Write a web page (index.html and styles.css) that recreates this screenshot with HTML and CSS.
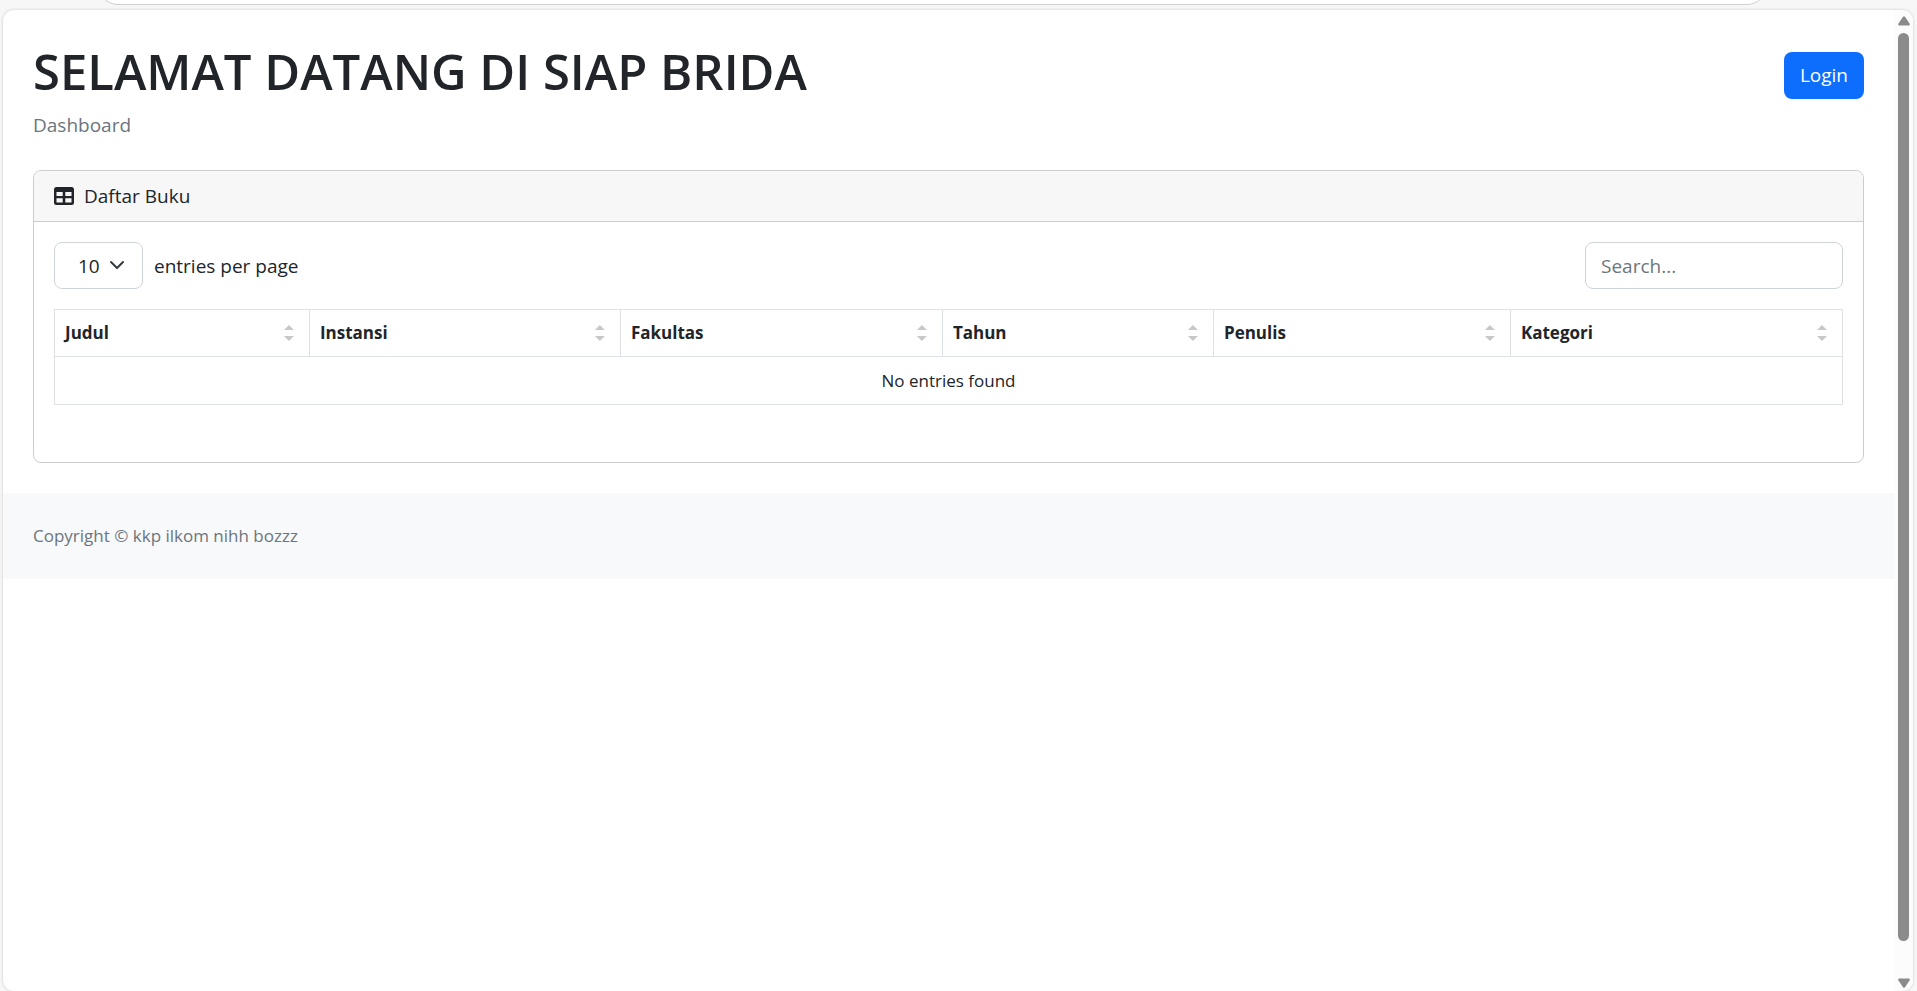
FILE: index.html
```html
<!DOCTYPE html>
<html lang="id">
<head>
<meta charset="utf-8">
<title>Dashboard - SIAP BRIDA</title>
<link rel="stylesheet" href="styles.css">
</head>
<body>
<div class="toolbar"><div class="address"></div></div>
<div class="window">
  <div class="page">
    <main class="content">
      <header class="heading">
        <h1 class="title">SELAMAT DATANG DI SIAP BRIDA</h1>
        <a class="login" href="#">Login</a>
      </header>
      <p class="crumb">Dashboard</p>
      <section class="card">
        <h2 class="card-header">
          <svg class="table-icon" viewBox="0 0 20 18" aria-hidden="true"><path fill="currentColor" fill-rule="evenodd" d="M2.5 0h15A2.5 2.5 0 0 1 20 2.500v13a2.500 2.500 0 0 1-2.500 2.500h-15A2.500 2.500 0 0 1 0 15.500v-13A2.500 2.500 0 0 1 2.500 0zM2.500 5v4h6.200V5zM11.300 5v4h6.200V5zM2.500 11.300v4.200h6.200v-4.200zM11.300 11.300v4.200h6.200v-4.200z"/></svg>
          Daftar Buku
        </h2>
        <div class="card-body">
          <div class="controls">
            <label class="per-page">
              <span class="select-wrap">
                <select class="select"><option>5</option><option selected>10</option><option>15</option></select>
                <svg class="chevron" viewBox="0 0 16 16" aria-hidden="true"><path d="M2 5l6 6 6-6" fill="none" stroke="#343a40" stroke-width="2" stroke-linecap="round" stroke-linejoin="round"/></svg>
              </span>
              entries per page
            </label>
            <input class="search" type="search" placeholder="Search..." aria-label="Search">
          </div>
          <table class="table">
            <colgroup><col class="c1"><col class="c2"><col class="c3"><col class="c4"><col class="c5"><col class="c6"></colgroup>
            <thead>
              <tr>
                <th><button class="sorter">Judul</button></th>
                <th><button class="sorter">Instansi</button></th>
                <th><button class="sorter">Fakultas</button></th>
                <th><button class="sorter">Tahun</button></th>
                <th><button class="sorter">Penulis</button></th>
                <th><button class="sorter">Kategori</button></th>
              </tr>
            </thead>
            <tbody><tr><td class="empty" colspan="6">No entries found</td></tr></tbody>
          </table>
        </div>
      </section>
    </main>
    <footer class="footer">Copyright © kkp ilkom nihh bozzz</footer>
  </div>
  <div class="scrollbar" aria-hidden="true">
    <svg class="arrow" viewBox="0 0 12 10"><path d="M5 .8Q6-.4 7 .8L11.700 7.800Q12.200 9.500 10.800 9.500H1.200Q-.2 9.500 .3 7.800z" fill="#8b8b8b"/></svg>
    <div class="thumb"></div>
    <svg class="arrow" viewBox="0 0 12 10"><path d="M5 9.200Q6 10.400 7 9.200L11.700 2.200Q12.200 .5 10.800 .5H1.200Q-.2 .5 .3 2.200z" fill="#8b8b8b"/></svg>
  </div>
</div>
</body>
</html>
```
FILE: styles.css
```css
* { box-sizing: border-box; }

body {
  margin: 0;
  height: 100vh;
  display: flex;
  flex-direction: column;
  background: #f7f7f7;
  color: #212529;
  font-family: "Open Sans", "Noto Sans", sans-serif;
  font-size: 19px;
  line-height: 30px;
  overflow: hidden;
}

.toolbar {
  flex: none;
  display: flex;
  align-items: flex-end;
  height: 10px;
  padding: 0 150px 5px 98px;
}

.address {
  flex: 1;
  height: 40px;
  background: #fff;
  border: 1px solid #d0d0d0;
  border-radius: 20px;
}

.window {
  flex: 1;
  min-height: 0;
  margin: 0 4px 0 3px;
  display: flex;
  background: #fff;
  border-radius: 11px;
  box-shadow: 0 0 3px rgba(0, 0, 0, .2);
  overflow: hidden;
}

.page { flex: 1; min-width: 0; }

.content { padding: 30px; }

.heading {
  display: flex;
  align-items: center;
  justify-content: space-between;
  margin-bottom: 8px;
}

.title {
  margin: 0;
  font-size: 49px;
  font-weight: 600;
  line-height: 62px;
}

.login {
  margin-top: 9px;
  padding: 8px 16px;
  border-radius: 8px;
  background: #0d6efd;
  color: #fff;
  line-height: 31px;
  text-decoration: none;
}

.crumb { margin: 0 0 30px; color: #6c757d; }

.card {
  border: 1px solid #ccc;
  border-radius: 8px;
  overflow: hidden;
}

.card-header {
  display: flex;
  align-items: center;
  gap: 10px;
  margin: 0;
  padding: 10px 20px;
  background: #f7f7f7;
  border-bottom: 1px solid #ccc;
  font-size: inherit;
  font-weight: 400;
}

.table-icon { width: 20px; height: 18px; }

.card-body { padding: 20px 20px 57px; }

.controls {
  display: flex;
  justify-content: space-between;
  margin-bottom: 20px;
}

.per-page { display: flex; align-items: center; gap: 11px; }

.select-wrap { position: relative; display: flex; }

.select, .search {
  height: 47px;
  border: 1px solid #ced4da;
  border-radius: 8px;
  background: #fff;
  color: inherit;
  font: inherit;
}

.select { width: 89px; padding: 0 20px 0 23px; appearance: none; }

.chevron {
  position: absolute;
  right: 18px;
  top: 15px;
  width: 16px;
  height: 16px;
  pointer-events: none;
}

.search { width: 258px; padding: 0 15px; appearance: none; }
.search::placeholder { color: #6c757d; opacity: 1; }

.table {
  width: 100%;
  table-layout: fixed;
  border-collapse: collapse;
  font-size: 17px;
  line-height: 27px;
}

.table th, .table td { border: 1px solid #dee2e6; padding: 10px; }
.table th { text-align: left; line-height: 26px; }

.c1 { width: 14.26%; }
.c2 { width: 17.39%; }
.c3 { width: 18.01%; }
.c4 { width: 15.16%; }
.c5 { width: 16.61%; }
.c6 { width: 18.57%; }

.sorter {
  display: flex;
  align-items: center;
  justify-content: space-between;
  width: 100%;
  padding: 0 5px 0 0;
  border: 0;
  background: none;
  color: inherit;
  font: inherit;
  font-weight: 700;
}

.sorter::after {
  content: "";
  width: 10px;
  height: 16px;
  background: #c8c8c8;
  clip-path: polygon(50% 0, 100% 5px, 0 5px, 0 11px, 100% 11px, 50% 100%, 0 11px, 0 5px);
}

.table .empty { text-align: center; }

.footer {
  padding: 28px 30px;
  background: #f8f9fa;
  color: #6c757d;
  font-size: 17px;
}

.scrollbar {
  flex: none;
  width: 19px;
  padding: 6px 0 3px;
  display: flex;
  flex-direction: column;
  align-items: center;
  background: #fcfcfc;
}

.arrow { flex: none; width: 12px; height: 10px; }

.thumb {
  flex: 1;
  width: 11px;
  margin: 7px 0 37px;
  border-radius: 6px;
  background: #8b8b8b;
}
```
